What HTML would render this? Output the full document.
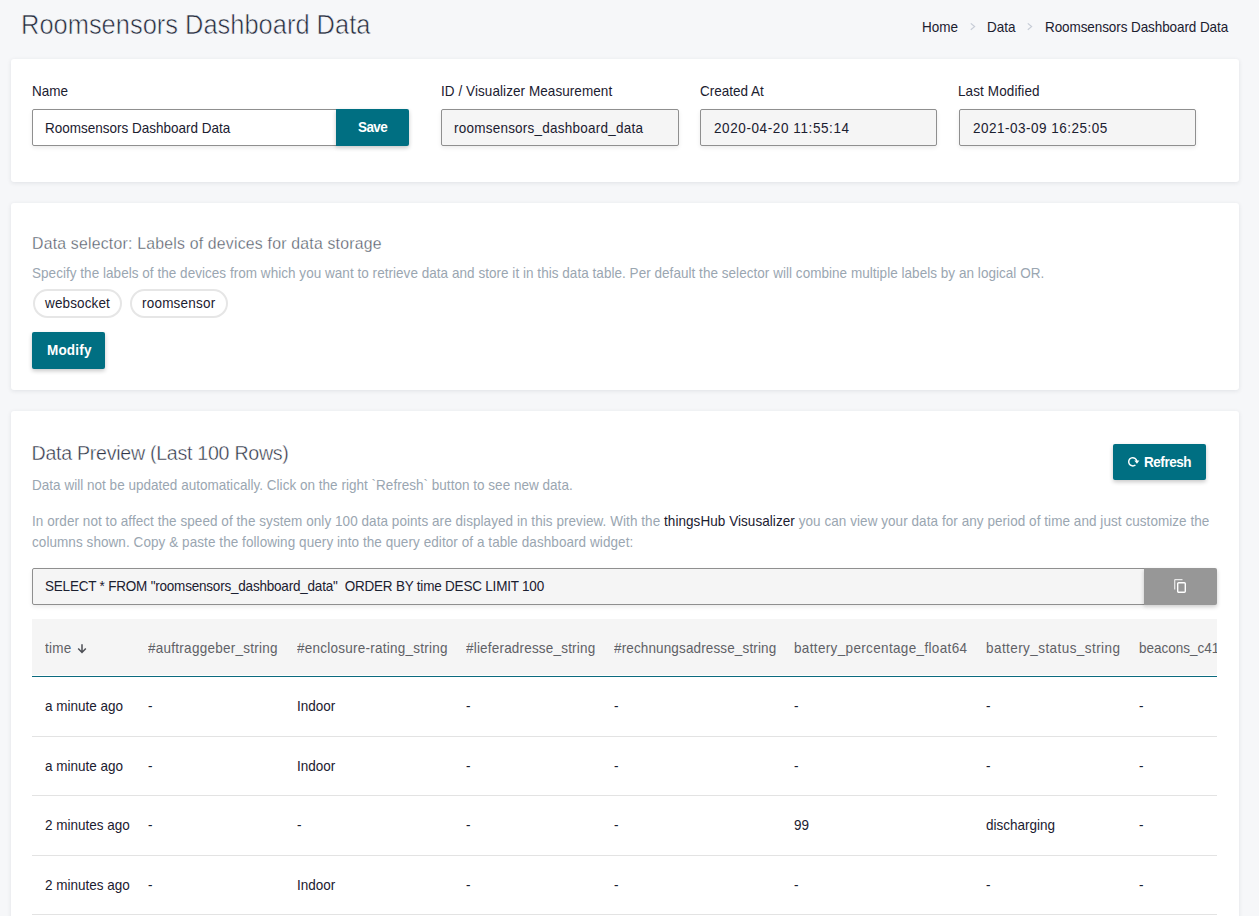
<!DOCTYPE html>
<html lang="en">
<head>
<meta charset="utf-8">
<title>Roomsensors Dashboard Data</title>
<style>
*{box-sizing:border-box;margin:0;padding:0}
html,body{width:1259px;height:916px;overflow:hidden}
body{background:#f6f7f9;font-family:"Liberation Sans",sans-serif;font-size:13.5px;color:#1b2030;position:relative}
.abs{position:absolute}
.t{position:absolute;white-space:pre;line-height:20px;font-size:14.2px;transform:scaleX(.9507);transform-origin:0 0;margin-top:-1px}
.card{position:absolute;left:11px;width:1228px;background:#fff;border-radius:3px;box-shadow:0 1px 4px rgba(30,40,60,.10)}
.inp{position:absolute;height:37px;border:1px solid #8f8f8f;border-radius:2px;background:#f5f5f5;box-shadow:0 2px 4px rgba(0,0,0,.08)}
.btn{position:absolute;background:#006f82;border-radius:2px;color:#fff;font-weight:700;box-shadow:0 2px 4px rgba(0,0,0,.22)}
.muted{color:#9aa6b1}
.pill{position:absolute;height:29px;border:2px solid #e6e6e6;border-radius:15px;background:#fff}
</style>
</head>
<body>
<!-- header -->
<h1 class="t" id="title" style="left:21.2px;top:9px;font-size:27.4px;line-height:34px;font-weight:400;color:#262c3e;-webkit-text-stroke:.6px #f6f7f9;transform-origin:0 0;transform:scaleX(.929)">Roomsensors Dashboard Data</h1>
<span class="t" id="bc1" style="left:922px;top:18px">Home</span>
<span class="t" id="bc2" style="left:987px;top:18px">Data</span>
<span class="t" id="bc3" style="left:1044.5px;top:18px;letter-spacing:-0.084px">Roomsensors Dashboard Data</span>
<svg class="abs" style="left:969px;top:21px" width="8" height="12" viewBox="0 0 8 12"><path d="M1.8 2.4 L5.6 5.6 L1.8 8.8" fill="none" stroke="#c6ccd6" stroke-width="1.2"/></svg>
<svg class="abs" style="left:1026px;top:21px" width="8" height="12" viewBox="0 0 8 12"><path d="M1.8 2.4 L5.6 5.6 L1.8 8.8" fill="none" stroke="#c6ccd6" stroke-width="1.2"/></svg>

<!-- card 1 -->
<div class="card" style="top:59px;height:123px"></div>
<span class="t" id="l1" style="left:32px;top:82px">Name</span>
<span class="t" id="l2" style="left:441.3px;top:82px;letter-spacing:.08px">ID / Visualizer Measurement</span>
<span class="t" id="l3" style="left:700px;top:82px">Created At</span>
<span class="t" id="l4" style="left:958.4px;top:82px;letter-spacing:.12px">Last Modified</span>
<div class="inp" style="left:32px;top:109px;width:306px;background:#fff"></div>
<span class="t" id="i1" style="left:45.4px;top:119px;letter-spacing:0px">Roomsensors Dashboard Data</span>
<div class="btn" style="left:336px;top:109px;width:73px;height:37px;border-radius:0 2px 2px 0"></div>
<span class="t" id="b1" style="left:357.6px;top:118.3px;color:#fff;font-weight:700;letter-spacing:-.6px">Save</span>
<div class="inp" style="left:441px;top:109px;width:238px"></div>
<span class="t" id="i2" style="left:454px;top:119px;letter-spacing:.25px">roomsensors_dashboard_data</span>
<div class="inp" style="left:700px;top:109px;width:237px"></div>
<span class="t" id="i3" style="left:713.5px;top:119px;letter-spacing:.63px">2020-04-20 11:55:14</span>
<div class="inp" style="left:959px;top:109px;width:237px"></div>
<span class="t" id="i4" style="left:972.5px;top:119px;letter-spacing:.53px">2021-03-09 16:25:05</span>

<!-- card 2 -->
<div class="card" style="top:203px;height:187px"></div>
<h5 class="t" id="h2" style="left:32px;top:234.5px;font-size:15.8px;font-weight:400;color:#535a68;transform:none;letter-spacing:.22px;-webkit-text-stroke:.3px #fff">Data selector: Labels of devices for data storage</h5>
<span class="t muted" id="d2" style="left:32px;top:264px;letter-spacing:.046px">Specify the labels of the devices from which you want to retrieve data and store it in this data table. Per default the selector will combine multiple labels by an logical OR.</span>
<div class="pill" style="left:32.5px;top:289px;width:89px"></div>
<span class="t" id="p1" style="left:45px;top:293.7px;letter-spacing:.15px">websocket</span>
<div class="pill" style="left:130px;top:289px;width:98px"></div>
<span class="t" id="p2" style="left:142.3px;top:293.7px;letter-spacing:.23px">roomsensor</span>
<div class="btn" style="left:32px;top:332px;width:73px;height:37px"></div>
<span class="t" id="b2" style="left:46.6px;top:341.1px;color:#fff;font-weight:700;letter-spacing:.2px">Modify</span>

<!-- card 3 -->
<div class="card" style="top:411px;height:520px"></div>
<h4 class="t" id="h3" style="left:31.5px;top:440px;font-size:19.6px;line-height:28px;font-weight:400;color:#2e3446;transform:none;letter-spacing:-.27px;-webkit-text-stroke:.4px #fff">Data Preview (Last 100 Rows)</h4>
<div class="btn" style="left:1113px;top:444px;width:93px;height:36px"></div>
<svg class="abs" id="ric" style="left:1127px;top:456px" width="13" height="12" viewBox="0 0 13 12"><path d="M8.44 8.94 A4.1 4.1 0 1 1 9.86 5.23" fill="none" stroke="#fff" stroke-width="1.45"/><path d="M7.3 4.5 L12.4 4.5 L9.9 7.7 Z" fill="#fff"/></svg>
<span class="t" id="b3" style="left:1143.8px;top:453px;color:#fff;font-weight:700;letter-spacing:-0.473px">Refresh</span>
<span class="t muted" id="d3" style="left:32px;top:476.1px;letter-spacing:.03px">Data will not be updated automatically. Click on the right `Refresh` button to see new data.</span>
<span class="t muted" id="d4" style="left:32px;top:511.9px;letter-spacing:.068px">In order not to affect the speed of the system only 100 data points are displayed in this preview. With the <span style="color:#1b2030">thingsHub Visusalizer</span> you can view your data for any period of time and just customize the</span>
<span class="t muted" id="d5" style="left:32px;top:533.4px;letter-spacing:.08px">columns shown. Copy &amp; paste the following query into the query editor of a table dashboard widget:</span>
<div class="inp" style="left:32px;top:568px;width:1114px;height:37px"></div>
<span class="t" id="q1" style="left:45px;top:576.8px;letter-spacing:-.21px">SELECT * FROM "roomsensors_dashboard_data"  ORDER BY time DESC LIMIT 100</span>
<div class="abs" id="cpy" style="left:1144px;top:568px;width:73px;height:37px;background:#979797;border-radius:0 2px 2px 0;box-shadow:0 2px 4px rgba(0,0,0,.2)"></div>
<svg class="abs" style="left:1173px;top:578px" width="14" height="16" viewBox="0 0 14 16"><path d="M1.7 11.5 V2.2 Q1.7 1.7 2.2 1.7 H9.5" fill="none" stroke="#fff" stroke-opacity=".8" stroke-width="1.2"/><rect x="4.7" y="4.7" width="7.6" height="9.6" rx="1" fill="none" stroke="#fff" stroke-width="1.4"/></svg>
<!-- table -->
<div class="abs" id="tbl" style="left:32px;top:619px;width:1185px;height:297px;overflow:hidden">
<div class="abs" style="left:0;top:0;width:1185px;height:56px;background:#f5f5f5"></div>
<div class="abs" style="left:0;top:57px;width:1185px;height:1px;background:#0b6a7e"></div>
<div class="abs" style="left:0;top:117px;width:1185px;height:1px;background:#e3e3e3"></div>
<div class="abs" style="left:0;top:176px;width:1185px;height:1px;background:#e3e3e3"></div>
<div class="abs" style="left:0;top:236px;width:1185px;height:1px;background:#e3e3e3"></div>
<div class="abs" style="left:0;top:295px;width:1185px;height:1px;background:#e3e3e3"></div>
<span class="t th" style="left:12.5px;top:20px;color:#5f6166;letter-spacing:0.258px">time</span>
<span class="t th" style="left:116px;top:20px;color:#5f6166;letter-spacing:0.284px">#auftraggeber_string</span>
<span class="t th" style="left:264.5px;top:20px;color:#5f6166;letter-spacing:0.270px">#enclosure-rating_string</span>
<span class="t th" style="left:433.5px;top:20px;color:#5f6166;letter-spacing:0.209px">#lieferadresse_string</span>
<span class="t th" style="left:581.5px;top:20px;color:#5f6166;letter-spacing:0.148px">#rechnungsadresse_string</span>
<span class="t th" style="left:762px;top:20px;color:#5f6166;letter-spacing:0.369px">battery_percentage_float64</span>
<span class="t th" style="left:953.5px;top:20px;color:#5f6166;letter-spacing:0.460px">battery_status_string</span>
<span class="t th" style="left:1106.5px;top:20px;color:#5f6166">beacons_c41</span>
<svg class="abs" style="left:45px;top:24px" width="10" height="11" viewBox="0 0 10 11"><path d="M5 1.3 V9.2 M1.2 5.6 L5 9.5 L8.8 5.6" fill="none" stroke="#4d4f55" stroke-width="1.5"/></svg>
<span class="t" style="left:12.5px;top:78.1px">a minute ago</span>
<span class="t" style="left:116px;top:78.1px">-</span>
<span class="t" style="left:264.5px;top:78.1px">Indoor</span>
<span class="t" style="left:433.5px;top:78.1px">-</span>
<span class="t" style="left:581.5px;top:78.1px">-</span>
<span class="t" style="left:762px;top:78.1px">-</span>
<span class="t" style="left:953.5px;top:78.1px">-</span>
<span class="t" style="left:1106.5px;top:78.1px">-</span>
<span class="t" style="left:12.5px;top:137.9px">a minute ago</span>
<span class="t" style="left:116px;top:137.9px">-</span>
<span class="t" style="left:264.5px;top:137.9px">Indoor</span>
<span class="t" style="left:433.5px;top:137.9px">-</span>
<span class="t" style="left:581.5px;top:137.9px">-</span>
<span class="t" style="left:762px;top:137.9px">-</span>
<span class="t" style="left:953.5px;top:137.9px">-</span>
<span class="t" style="left:1106.5px;top:137.9px">-</span>
<span class="t" style="left:12.5px;top:196.6px">2 minutes ago</span>
<span class="t" style="left:116px;top:196.6px">-</span>
<span class="t" style="left:264.5px;top:196.6px">-</span>
<span class="t" style="left:433.5px;top:196.6px">-</span>
<span class="t" style="left:581.5px;top:196.6px">-</span>
<span class="t" style="left:762px;top:196.6px">99</span>
<span class="t" style="left:953.5px;top:196.6px">discharging</span>
<span class="t" style="left:1106.5px;top:196.6px">-</span>
<span class="t" style="left:12.5px;top:257.1px">2 minutes ago</span>
<span class="t" style="left:116px;top:257.1px">-</span>
<span class="t" style="left:264.5px;top:257.1px">Indoor</span>
<span class="t" style="left:433.5px;top:257.1px">-</span>
<span class="t" style="left:581.5px;top:257.1px">-</span>
<span class="t" style="left:762px;top:257.1px">-</span>
<span class="t" style="left:953.5px;top:257.1px">-</span>
<span class="t" style="left:1106.5px;top:257.1px">-</span>
</div>
</body>
</html>
